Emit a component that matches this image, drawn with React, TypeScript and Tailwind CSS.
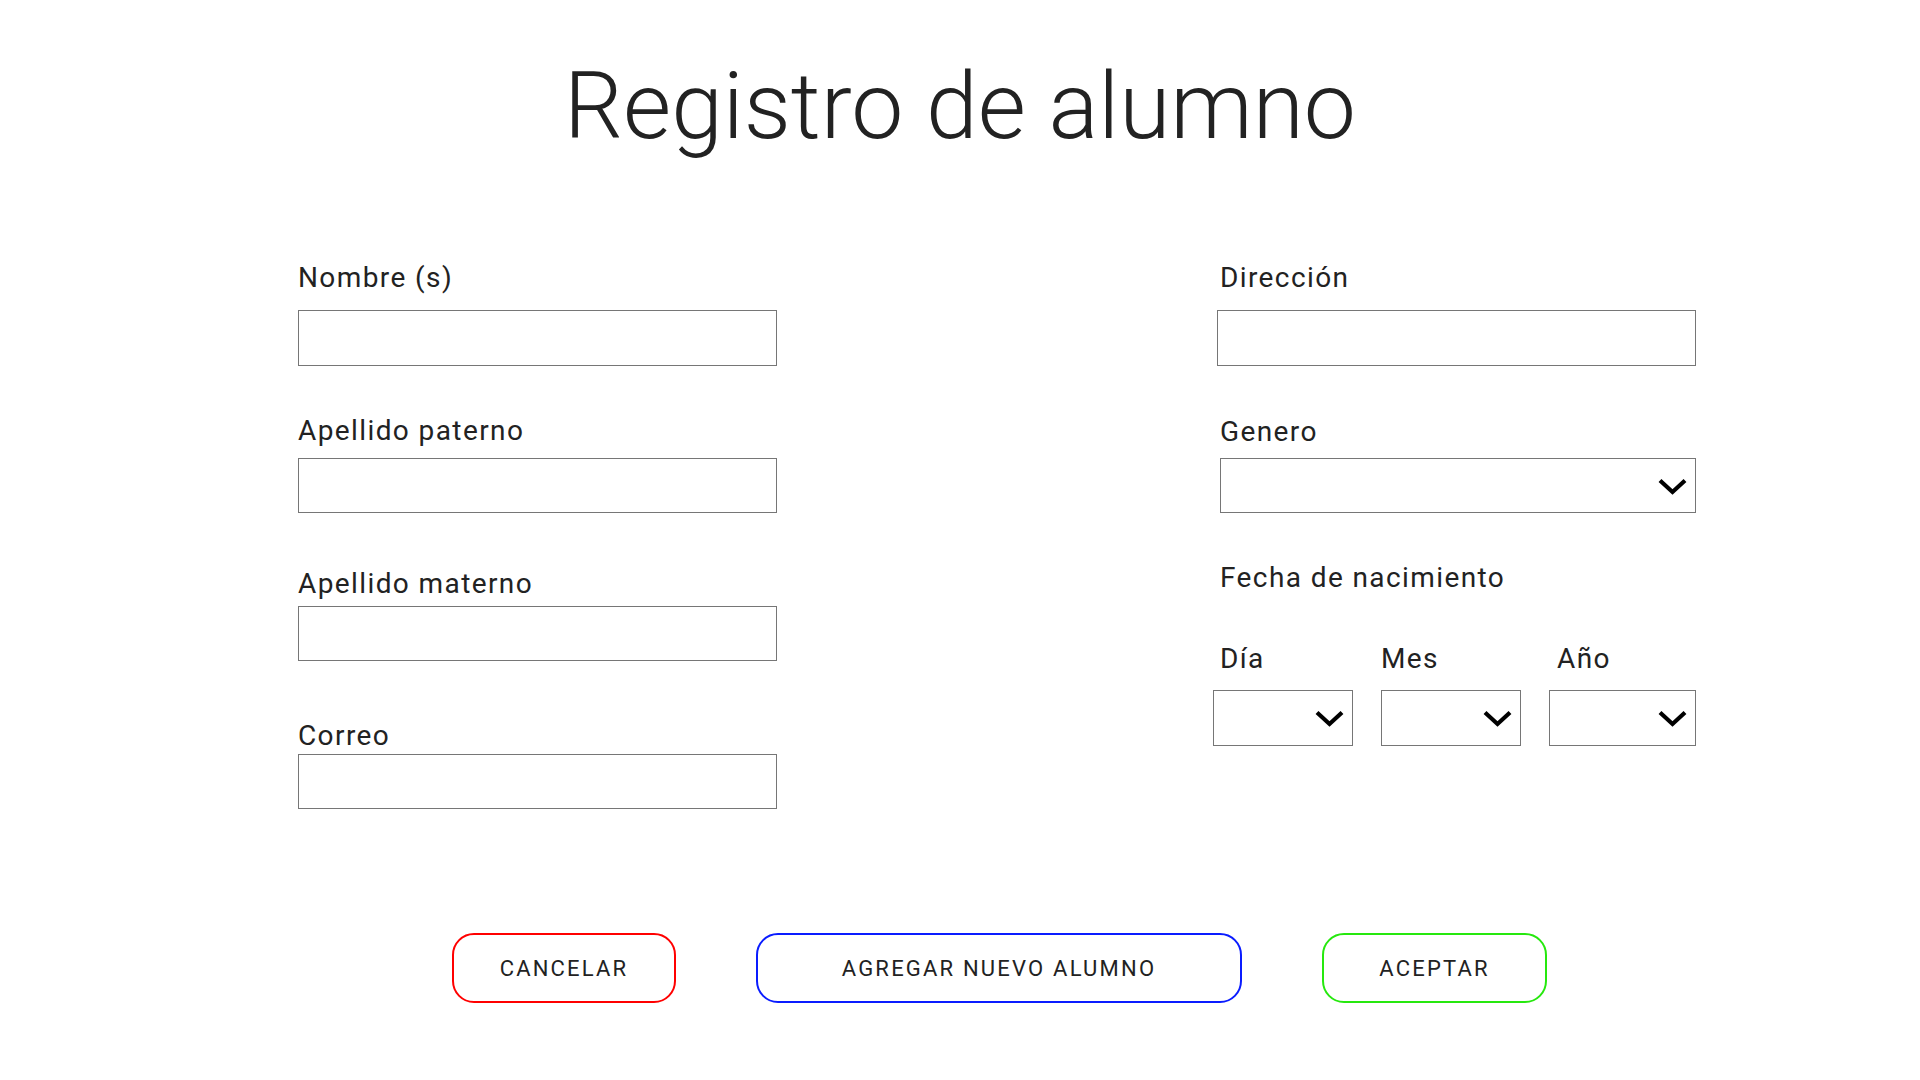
import React from "react";

function Chevron() {
  return (
    <svg
      width="29"
      height="18"
      viewBox="0 0 29 18"
      className="pointer-events-none absolute right-[9px] top-1/2 -translate-y-1/2"
    >
      <path d="M2 3.5 L14.5 15 L27 3.5" fill="none" stroke="#000" strokeWidth="4.2" />
    </svg>
  );
}

function SelectBox({ className }: { className: string }) {
  return (
    <div className={"relative " + className}>
      <select className="h-full w-full appearance-none border border-[#767676] bg-white outline-none" />
      <Chevron />
    </div>
  );
}

const label = "block pt-[1px] text-[28px] leading-none tracking-wider text-[#222]";
const input = "block border border-[#767676] bg-white outline-none";

export default function App() {
  return (
    <div className="min-h-screen bg-white font-['Roboto',sans-serif] text-[#222]">
      <h1 className="pt-[60px] text-center text-[93px] font-light leading-none text-[#222]">
        Registro de alumno
      </h1>

      <div className="ml-[298px] mt-[110px] flex w-[1398px] justify-between">
        {/* columna izquierda */}
        <div className="w-[479px]">
          <label className={label}>Nombre (s)</label>
          <input className={input + " mt-[18px] h-[56px] w-[479px]"} />

          <label className={label + " mt-[50px]"}>Apellido paterno</label>
          <input className={input + " mt-[13px] h-[55px] w-[479px]"} />

          <label className={label + " mt-[56px]"}>Apellido materno</label>
          <input className={input + " mt-[8px] h-[55px] w-[479px]"} />

          <label className={label + " mt-[60px]"}>Correo</label>
          <input className={input + " mt-[4px] h-[55px] w-[479px]"} />
        </div>

        {/* columna derecha */}
        <div className="w-[483px]">
          <label className={label + " ml-[7px]"}>Dirección</label>
          <input className={input + " ml-[4px] mt-[18px] h-[56px] w-[479px]"} />

          <label className={label + " ml-[7px] mt-[51px]"}>Genero</label>
          <SelectBox className="ml-[7px] mt-[12px] h-[55px] w-[476px]" />

          <label className={label + " ml-[7px] mt-[50px]"}>Fecha de nacimiento</label>

          <div className="mt-[52px] flex gap-[28px]">
            <div>
              <label className={label + " ml-[7px]"}>Día</label>
              <SelectBox className="mt-[17px] h-[56px] w-[140px]" />
            </div>
            <div>
              <label className={label}>Mes</label>
              <SelectBox className="mt-[17px] h-[56px] w-[140px]" />
            </div>
            <div>
              <label className={label + " ml-[8px]"}>Año</label>
              <SelectBox className="mt-[17px] h-[56px] w-[147px]" />
            </div>
          </div>
        </div>
      </div>

      <div className="ml-[452px] mt-[124px] flex gap-[80px]">
        <button className="h-[70px] w-[224px] rounded-[22px] border-2 border-[#ff0000] bg-white text-[22px] font-normal tracking-[2.2px] text-[#222]">
          CANCELAR
        </button>
        <button className="h-[70px] w-[486px] rounded-[22px] border-2 border-[#0a1cff] bg-white text-[22px] font-normal tracking-[2.2px] text-[#222]">
          AGREGAR NUEVO ALUMNO
        </button>
        <button className="h-[70px] w-[225px] rounded-[22px] border-2 border-[#26e80e] bg-white text-[22px] font-normal tracking-[2.2px] text-[#222]">
          ACEPTAR
        </button>
      </div>
    </div>
  );
}
